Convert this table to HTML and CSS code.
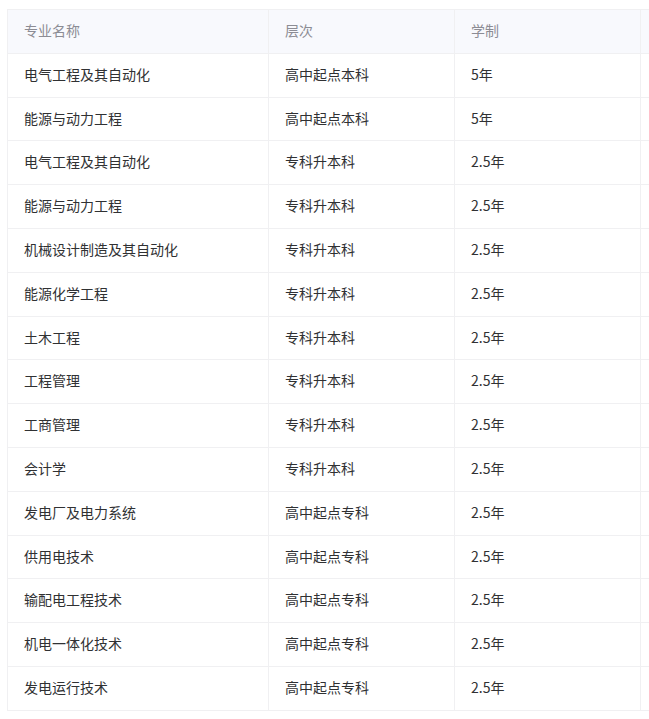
FILE: index.html
```html
<!DOCTYPE html>
<html lang="zh-CN">
<head>
<meta charset="utf-8">
<title>专业列表</title>
<link rel="stylesheet" href="styles.css">
</head>
<body>
<div class="wrap">
<table class="majors">
<colgroup>
<col class="c1"><col class="c2"><col class="c3"><col class="c4">
</colgroup>
<thead>
<tr><th>专业名称</th><th>层次</th><th>学制</th><th></th></tr>
</thead>
<tbody>
<tr><td>电气工程及其自动化</td><td>高中起点本科</td><td>5年</td><td></td></tr>
<tr><td>能源与动力工程</td><td>高中起点本科</td><td>5年</td><td></td></tr>
<tr><td>电气工程及其自动化</td><td>专科升本科</td><td>2.5年</td><td></td></tr>
<tr><td>能源与动力工程</td><td>专科升本科</td><td>2.5年</td><td></td></tr>
<tr><td>机械设计制造及其自动化</td><td>专科升本科</td><td>2.5年</td><td></td></tr>
<tr><td>能源化学工程</td><td>专科升本科</td><td>2.5年</td><td></td></tr>
<tr><td>土木工程</td><td>专科升本科</td><td>2.5年</td><td></td></tr>
<tr><td>工程管理</td><td>专科升本科</td><td>2.5年</td><td></td></tr>
<tr><td>工商管理</td><td>专科升本科</td><td>2.5年</td><td></td></tr>
<tr><td>会计学</td><td>专科升本科</td><td>2.5年</td><td></td></tr>
<tr><td>发电厂及电力系统</td><td>高中起点专科</td><td>2.5年</td><td></td></tr>
<tr><td>供用电技术</td><td>高中起点专科</td><td>2.5年</td><td></td></tr>
<tr><td>输配电工程技术</td><td>高中起点专科</td><td>2.5年</td><td></td></tr>
<tr><td>机电一体化技术</td><td>高中起点专科</td><td>2.5年</td><td></td></tr>
<tr><td>发电运行技术</td><td>高中起点专科</td><td>2.5年</td><td></td></tr>
</tbody>
</table>
</div>
</body>
</html>
```
FILE: styles.css
```css
html, body {
  margin: 0;
  padding: 0;
  background: #ffffff;
}
body {
  font-family: "Noto Sans CJK SC", "Noto Sans", "Liberation Sans", sans-serif;
  font-size: 14px;
  color: #303133;
}
.wrap {
  padding: 9px 0 0 7px;
  overflow: hidden;
  width: 642px;
}
.majors {
  table-layout: fixed;
  border-collapse: separate;
  border-spacing: 0;
  width: 900px;
  border-top: 1px solid #f0f0f2;
  border-left: 1px solid #f0f0f2;
}
.c1 { width: 261px; }
.c2 { width: 186px; }
.c3 { width: 186px; }
.c4 { width: 267px; }
.majors th,
.majors td {
  box-sizing: border-box;
  text-align: left;
  padding: 11px 16px 13px;
  line-height: 18.8px;
  height: 43.8px;
  border-right: 1px solid #f0f0f2;
  border-bottom: 1px solid #f0f0f2;
  white-space: nowrap;
  vertical-align: middle;
}
.majors th {
  font-weight: normal;
  color: #8c8c94;
  background: #f8f9fd;
}
.majors td {
  color: #303133;
}
```
